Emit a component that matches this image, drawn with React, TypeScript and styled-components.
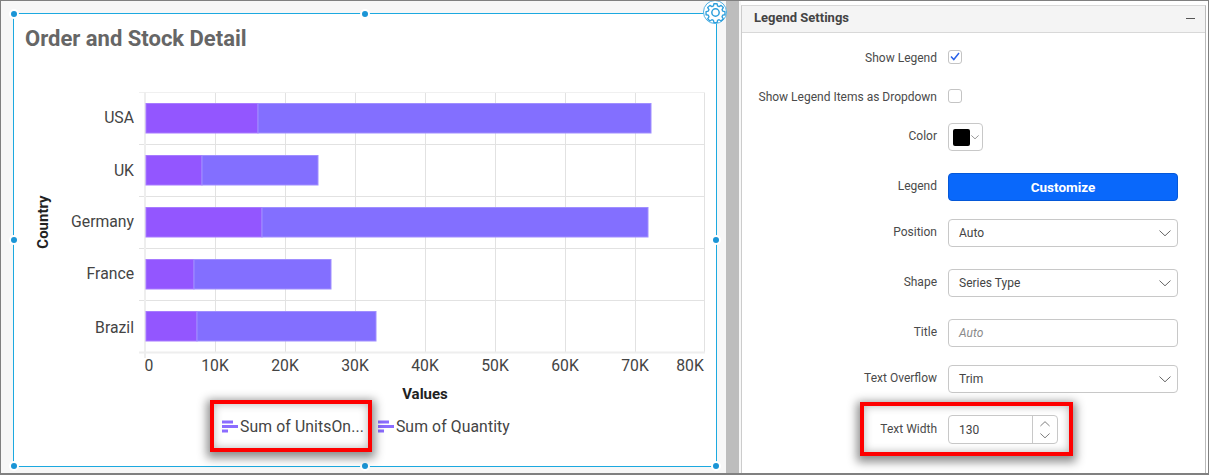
import React from "react";
import styled, { createGlobalStyle } from "styled-components";

const Global = createGlobalStyle`
  html, body { margin: 0; padding: 0; background: #fff; }
  body { font-family: Roboto, "Liberation Sans", sans-serif; }
`;

const Page = styled.div`
  position: relative;
  box-sizing: border-box;
  width: 1209px;
  height: 475px;
  display: flex;
  overflow: hidden;
  border: 1px solid #808080;
  border-width: 1px 1px 2px 1px;
`;

const Canvas = styled.div`
  box-sizing: border-box;
  width: 725px;
  flex: none;
  padding: 12px 9px 6px 12px;
  background: #f7f7f7;
`;

const Widget = styled.div`
  position: relative;
  box-sizing: border-box;
  height: 454px;
  background: #fff;
  border: 1px solid #1ca9e0;
  padding-top: 10px;
`;

const Handle = styled.span<{ $x: string; $y: string }>`
  position: absolute;
  left: ${(p) => p.$x};
  top: ${(p) => p.$y};
  width: 6px;
  height: 6px;
  margin: -3px 0 0 -3px;
  border-radius: 50%;
  background: #1b95d6;
  box-shadow: 0 0 0 2px #fff;
`;

const GearWrap = styled.span`
  position: absolute;
  right: -11px;
  top: -14px;
  width: 24px;
  height: 24px;
  border-radius: 50%;
  background: #fff;
  border: 1px solid #4fb0e3;
  box-sizing: border-box;
  display: flex;
  align-items: center;
  justify-content: center;
`;

const Title = styled.div`
  padding-left: 11px;
  height: 29px;
  line-height: 29px;
  font-size: 22px;
  font-weight: 700;
  color: #666;
`;

const ChartSvg = styled.svg`
  display: block;
  margin-top: 30px;
  font-family: Roboto, "Liberation Sans", sans-serif;
`;

const Legend = styled.div`
  display: flex;
  justify-content: center;
  gap: 14px;
  margin-top: 12px;
  font-size: 15.75px;
  letter-spacing: 0.1px;
  color: #444;
  padding-left: 2px;
`;

const LegendItem = styled.div`
  display: flex;
  align-items: center;
  gap: 2px;
  height: 20px;
`;

const Splitter = styled.div`
  width: 13px;
  flex: none;
  background: #bdbdbd;
`;

const Gutter = styled.div`
  width: 2px;
  flex: none;
  background: #f7f7f7;
`;

const Panel = styled.div`
  width: 465px;
  flex: none;
  box-sizing: border-box;
  margin-top: 4px;
  border-left: 1px solid #ccc;
  border-right: 1px solid #bbb;
  border-top: 1px solid #d8d8d8;
  background: #fff;
`;

const PanelHeader = styled.div`
  box-sizing: border-box;
  height: 27px;
  display: flex;
  align-items: center;
  justify-content: space-between;
  padding: 0 10px 3px 12px;
  background: #f4f4f4;
  border-bottom: 1px solid #d8d8d8;
  font-size: 13px;
  font-weight: 700;
  color: #444;
`;

const Minus = styled.span`
  width: 9px;
  height: 1px;
  margin-top: 1px;
  background: #555;
`;

const Form = styled.div`
  display: flex;
  flex-direction: column;
  padding-top: 11px;
`;

const Row = styled.div<{ $top: number; $h?: number }>`
  display: flex;
  align-items: center;
  gap: 11px;
  height: ${(p) => p.$h ?? 28}px;
  margin-top: ${(p) => p.$top}px;
`;

const Label = styled.div`
  width: 195px;
  flex: none;
  padding-bottom: 2px;
  text-align: right;
  font-size: 12px;
  color: #4a4a4a;
`;

const Check = styled.span`
  box-sizing: border-box;
  width: 14px;
  height: 14px;
  margin-top: -5px;
  border: 1px solid #c4c4c4;
  border-radius: 3px;
  display: flex;
  align-items: center;
  justify-content: center;
`;

const ColorBox = styled.div`
  box-sizing: border-box;
  width: 35px;
  height: 28px;
  border: 1px solid #c8c8c8;
  border-radius: 4px;
  display: flex;
  align-items: center;
  padding-left: 4px;
  gap: 1px;
`;

const Swatch = styled.span`
  width: 17px;
  height: 17px;
  border-radius: 2px;
  background: #000;
`;

const Button = styled.button`
  box-sizing: border-box;
  width: 230px;
  height: 28px;
  padding: 0 0 1px;
  background: #0968fb;
  border: 1px solid #0558d8;
  border-radius: 4px;
  color: #fff;
  font-family: inherit;
  font-size: 13.5px;
  font-weight: 700;
`;

const Select = styled.div`
  box-sizing: border-box;
  width: 230px;
  height: 28px;
  border: 1px solid #c8c8c8;
  border-radius: 4px;
  display: flex;
  align-items: center;
  justify-content: space-between;
  padding: 0 6px 0 10px;
  font-size: 12px;
  color: #444;
`;

const Placeholder = styled.span`
  font-style: italic;
  color: #8a8a8a;
`;

const NumberBox = styled.div`
  box-sizing: border-box;
  width: 110px;
  height: 29px;
  border: 1px solid #c8c8c8;
  border-radius: 4px;
  display: flex;
  align-items: center;
  font-size: 12px;
  color: #444;
`;

const NumberValue = styled.span`
  flex: 1;
  padding-left: 10px;
`;

const Spinner = styled.div`
  width: 24px;
  height: 100%;
  border-left: 1px solid #c8c8c8;
  display: flex;
  flex-direction: column;
  align-items: center;
  justify-content: center;
  gap: 6px;
`;

const Highlight = styled.div<{ $x: number; $y: number; $w: number; $h: number }>`
  position: absolute;
  left: ${(p) => p.$x}px;
  top: ${(p) => p.$y}px;
  width: ${(p) => p.$w}px;
  height: ${(p) => p.$h}px;
  box-sizing: border-box;
  border: 4px solid #fe0000;
  box-shadow: 0 3px 9px 3px rgba(0, 0, 0, 0.45), inset 0 0 8px rgba(0, 0, 0, 0.3);
`;

const Chevron = ({ w = 12, up = false }: { w?: number; up?: boolean }) => (
  <svg width={w} height={w * 0.55} viewBox="0 0 12 6.6" fill="none" stroke="#666" strokeWidth="1">
    <path d={up ? "M0.5 6 6 0.8 11.5 6" : "M0.5 0.6 6 5.8 11.5 0.6"} />
  </svg>
);

const LegendIcon = () => (
  <svg width="16" height="13" viewBox="0 0 16 13" fill="#8b6cff">
    <rect x="0" y="0.5" width="11" height="3" />
    <rect x="0" y="5" width="16" height="3" />
    <rect x="0" y="9.5" width="6" height="3" />
  </svg>
);

const Gear = () => (
  <svg width="21" height="21" viewBox="0 0 24 24" fill="none" stroke="#2e9fdc" strokeWidth="1.7" strokeLinejoin="round">
    <path d="M10 1.500h4l.6 2.900 2 .8 2.500-1.600 2.800 2.800-1.600 2.500.8 2 2.900.6v4l-2.900.6-.8 2 1.600 2.500-2.800 2.800-2.500-1.600-2 .8-.6 2.900h-4l-.6-2.900-2-.8-2.500 1.600-2.800-2.800 1.600-2.500-.8-2-2.900-.6v-4l2.900-.6.8-2-1.600-2.500 2.800-2.800 2.500 1.600 2-.8z" transform="translate(1.200 0.600) scale(0.9)" />
    <circle cx="12" cy="12" r="4.200" />
  </svg>
);

const bands = [
  { name: "USA", a: 258, b: 651, dy: 19.5 },
  { name: "UK", a: 202, b: 318, dy: 20 },
  { name: "Germany", a: 262, b: 648, dy: 19.5 },
  { name: "France", a: 194, b: 331, dy: 19.5 },
  { name: "Brazil", a: 197, b: 376, dy: 21 },
];

const xTicks = [
  { t: "0", x: 149 },
  { t: "10K", x: 215 },
  { t: "20K", x: 285 },
  { t: "30K", x: 355 },
  { t: "40K", x: 425 },
  { t: "50K", x: 495 },
  { t: "60K", x: 565 },
  { t: "70K", x: 635 },
  { t: "80K", x: 690 },
];

const Chart = () => (
  <ChartSvg width="702" height="321" viewBox="14 83 702 321">
    {[215, 285, 355, 425, 495, 565, 635, 704].map((x) => (
      <line key={x} x1={x + 0.5} y1="92" x2={x + 0.5} y2="352" stroke="#e2e2e2" />
    ))}
    {[92, 144, 196, 248, 300].map((y) => (
      <line key={y} x1="139" y1={y + 0.5} x2="705" y2={y + 0.5} stroke={y === 92 ? "#f0f0f0" : "#e2e2e2"} />
    ))}
    <line x1="145" y1="92" x2="145" y2="358" stroke="#eeeeee" strokeWidth="2" />
    <line x1="139" y1="352.500" x2="705" y2="352.500" stroke="#eeeeee" strokeWidth="2" />
    {bands.map((b, i) => {
      const y = 103.5 + i * 52;
      return (
        <g key={b.name} strokeWidth="1">
          <rect x="146" y={y} width={b.a - 146} height="29.500" fill="#9356ff" stroke="#a77bff" />
          <rect x={b.a} y={y} width={b.b - b.a} height="29.500" fill="#836fff" stroke="#a08fff" />
          <text x="134" y={y + b.dy - 0} textAnchor="end" fontSize="15.750" fill="#444">
            {b.name}
          </text>
        </g>
      );
    })}
    {xTicks.map((t) => (
      <text key={t.t} x={t.x} y="371" textAnchor="middle" fontSize="15.750" fill="#444">
        {t.t}
      </text>
    ))}
    <text x="425" y="399" textAnchor="middle" fontSize="15" fontWeight="700" fill="#222">
      Values
    </text>
    <text
      transform="translate(48 222) rotate(-90)"
      textAnchor="middle"
      fontSize="15"
      fontWeight="700"
      fill="#222"
    >
      Country
    </text>
  </ChartSvg>
);

export default function App() {
  return (
    <Page>
      <Global />
      <Canvas>
        <Widget>
          <Handle $x="0" $y="0" />
          <Handle $x="50%" $y="0" />
          <Handle $x="0" $y="50%" />
          <Handle $x="100%" $y="50%" />
          <Handle $x="0" $y="100%" />
          <Handle $x="50%" $y="100%" />
          <Handle $x="100%" $y="100%" />
          <GearWrap>
            <Gear />
          </GearWrap>
          <Title>Order and Stock Detail</Title>
          <Chart />
          <Legend>
            <LegendItem>
              <LegendIcon />
              Sum of UnitsOn...
            </LegendItem>
            <LegendItem>
              <LegendIcon />
              Sum of Quantity
            </LegendItem>
          </Legend>
        </Widget>
      </Canvas>
      <Splitter />
      <Gutter />
      <Panel>
        <PanelHeader>
          Legend Settings
          <Minus />
        </PanelHeader>
        <Form>
          <Row $top={1}>
            <Label>Show Legend</Label>
            <Check>
              <svg width="10" height="9" viewBox="0 0 10 9" fill="none" stroke="#2b62e8" strokeWidth="1.500">
                <path d="M1 4.500 3.800 7.500 9 1" />
              </svg>
            </Check>
          </Row>
          <Row $top={11}>
            <Label>Show Legend Items as Dropdown</Label>
            <Check />
          </Row>
          <Row $top={11}>
            <Label>Color</Label>
            <ColorBox>
              <Swatch />
              <Chevron w={8} />
            </ColorBox>
          </Row>
          <Row $top={22}>
            <Label>Legend</Label>
            <Button>Customize</Button>
          </Row>
          <Row $top={18}>
            <Label>Position</Label>
            <Select>
              Auto
              <Chevron />
            </Select>
          </Row>
          <Row $top={22}>
            <Label>Shape</Label>
            <Select>
              Series Type
              <Chevron />
            </Select>
          </Row>
          <Row $top={22}>
            <Label>Title</Label>
            <Select>
              <Placeholder>Auto</Placeholder>
            </Select>
          </Row>
          <Row $top={18}>
            <Label>Text Overflow</Label>
            <Select>
              Trim
              <Chevron />
            </Select>
          </Row>
          <Row $top={22} $h={29}>
            <Label>Text Width</Label>
            <NumberBox>
              <NumberValue>130</NumberValue>
              <Spinner>
                <Chevron w={10} up />
                <Chevron w={10} />
              </Spinner>
            </NumberBox>
          </Row>
        </Form>
      </Panel>
      <Highlight $x={209} $y={399} $w={162} $h={52} />
      <Highlight $x={859} $y={401} $w={213} $h={54} />
    </Page>
  );
}
